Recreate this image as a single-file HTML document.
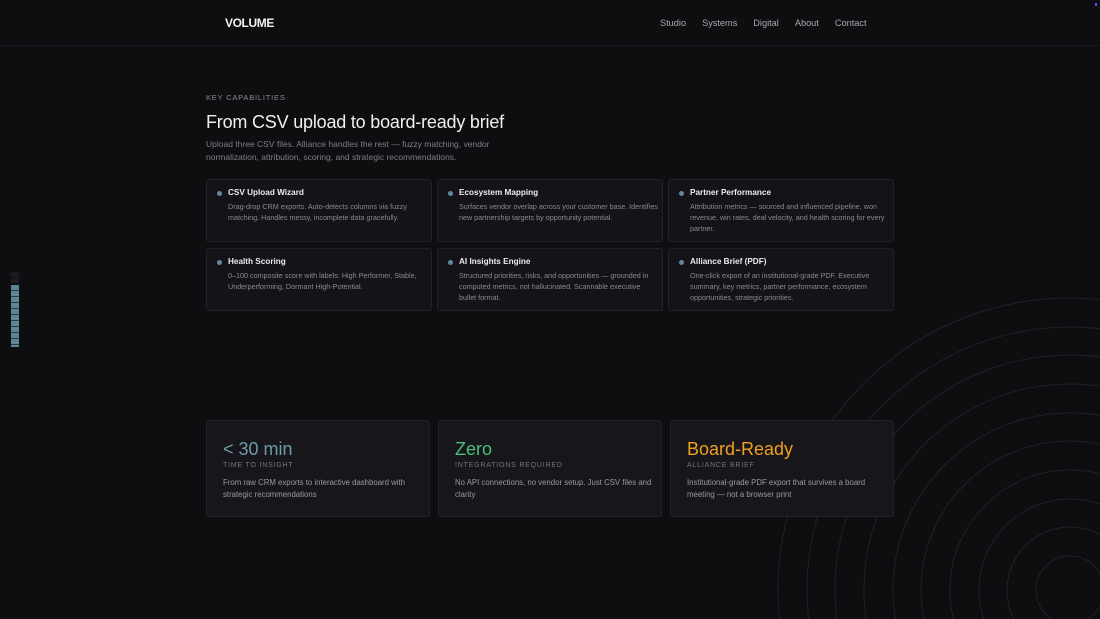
<!DOCTYPE html>
<html><head><meta charset="utf-8"><style>
*{margin:0;padding:0;box-sizing:border-box}
html,body{width:1100px;height:619px;overflow:hidden}
body{background:#0e0d10;font-family:"Liberation Sans",sans-serif;position:relative;color:#e8e8ea}
.nav{position:absolute;top:0;left:0;width:1100px;height:46px;border-bottom:1px solid #1a191d}
.logo{position:absolute;left:225px;top:16px;font-size:12px;font-weight:bold;color:#f2f2f2;letter-spacing:-0.4px}
.links{position:absolute;top:18px;left:660px;font-size:9.2px;color:#a9a9ad}
.links span{margin-right:16px}
.eyebrow{position:absolute;left:206px;top:93px;font-size:7.5px;letter-spacing:0.8px;color:#8a8a90}
h1{position:absolute;left:206px;top:112px;font-size:18px;font-weight:normal;color:#f0f0f2;letter-spacing:-0.2px}
.sub{position:absolute;left:206px;top:138px;font-size:8.5px;line-height:12.5px;color:#7f7f86;width:300px}
.card{position:absolute;width:226px;height:63px;background:#141317;border:1px solid #222126;border-radius:3px}
.card .dot{position:absolute;left:10px;top:11px;width:5px;height:5px;border-radius:50%;background:#5f8b9a}
.card h3{position:absolute;left:21px;top:8px;font-size:8.2px;color:#ededee}
.card p{position:absolute;left:21px;top:21px;width:200px;font-size:7.2px;line-height:11px;color:#8a8a90}
.stat{position:absolute;top:420px;width:224px;height:97px;background:#17161a;border:1px solid #232227;border-radius:3px}
.stat .v{position:absolute;left:16px;top:18px;font-size:18px}
.stat .l{position:absolute;left:16px;top:41px;font-size:7px;letter-spacing:0.8px;color:#75757b}
.stat p{position:absolute;left:16px;top:56px;width:200px;font-size:7.8px;line-height:12px;color:#9a9aa0}
.bar{position:absolute;left:11px;width:8px;height:5px}
</style></head><body>
<div class="nav"><div class="logo">VOLUME</div><div class="links"><span>Studio</span><span>Systems</span><span>Digital</span><span>About</span><span>Contact</span></div></div>
<div style="position:absolute;right:3px;top:3px;width:2px;height:3px;background:#5a4cff"></div>
<svg width="1100" height="619" style="position:absolute;left:0;top:0;display:block">
<g fill="none" stroke="#222126" stroke-width="1">
<circle cx="1070" cy="590" r="34"/><circle cx="1070" cy="590" r="63"/><circle cx="1070" cy="590" r="91"/><circle cx="1070" cy="590" r="120"/><circle cx="1070" cy="590" r="149"/><circle cx="1070" cy="590" r="177"/><circle cx="1070" cy="590" r="206"/><circle cx="1070" cy="590" r="235"/><circle cx="1070" cy="590" r="263"/><circle cx="1070" cy="590" r="292"/>
</g></svg>
<div class="bar" style="top:272px;background:#1c1c20"></div>
<div class="bar" style="top:278px;background:#1c1c20"></div>
<div style="position:absolute;left:11px;top:285px;width:8px;height:62px;background:repeating-linear-gradient(#5a8796 0 5px,#2a3a40 5px 6px)"></div>
<div class="eyebrow">KEY CAPABILITIES</div>
<h1>From CSV upload to board-ready brief</h1>
<div class="sub">Upload three CSV files. Alliance handles the rest — fuzzy matching, vendor normalization, attribution, scoring, and strategic recommendations.</div>
<div class="card" style="left:206px;top:179px"><div class="dot"></div><h3>CSV Upload Wizard</h3><p>Drag-drop CRM exports. Auto-detects columns via fuzzy matching. Handles messy, incomplete data gracefully.</p></div>
<div class="card" style="left:437px;top:179px"><div class="dot"></div><h3>Ecosystem Mapping</h3><p>Surfaces vendor overlap across your customer base. Identifies new partnership targets by opportunity potential.</p></div>
<div class="card" style="left:668px;top:179px"><div class="dot"></div><h3>Partner Performance</h3><p>Attribution metrics — sourced and influenced pipeline, won revenue, win rates, deal velocity, and health scoring for every partner.</p></div>
<div class="card" style="left:206px;top:248px"><div class="dot"></div><h3>Health Scoring</h3><p>0–100 composite score with labels: High Performer, Stable, Underperforming, Dormant High-Potential.</p></div>
<div class="card" style="left:437px;top:248px"><div class="dot"></div><h3>AI Insights Engine</h3><p>Structured priorities, risks, and opportunities — grounded in computed metrics, not hallucinated. Scannable executive bullet format.</p></div>
<div class="card" style="left:668px;top:248px"><div class="dot"></div><h3>Alliance Brief (PDF)</h3><p>One-click export of an institutional-grade PDF. Executive summary, key metrics, partner performance, ecosystem opportunities, strategic priorities.</p></div>
<div class="stat" style="left:206px"><div class="v" style="color:#6f9aa8">&lt; 30 min</div><div class="l">TIME TO INSIGHT</div><p>From raw CRM exports to interactive dashboard with strategic recommendations</p></div>
<div class="stat" style="left:438px"><div class="v" style="color:#4cc07a">Zero</div><div class="l">INTEGRATIONS REQUIRED</div><p>No API connections, no vendor setup. Just CSV files and clarity</p></div>
<div class="stat" style="left:670px"><div class="v" style="color:#f0a020">Board-Ready</div><div class="l">ALLIANCE BRIEF</div><p>Institutional-grade PDF export that survives a board meeting — not a browser print</p></div>
</body></html>
